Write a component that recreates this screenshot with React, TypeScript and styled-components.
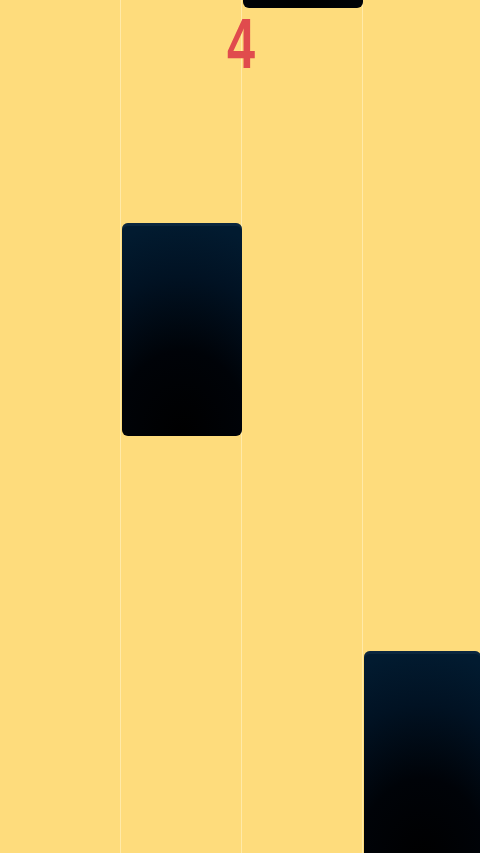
import styled, { createGlobalStyle } from "styled-components";

const GlobalStyle = createGlobalStyle`
  html, body {
    margin: 0;
    padding: 0;
    height: 100%;
    overflow: hidden;
    background: #fedc7c;
  }
  #root {
    height: 100%;
  }
`;

interface Tile {
  lane: number;
  top: number;
}

const tiles: Tile[] = [
  { lane: 2, top: -205 },
  { lane: 1, top: 223 },
  { lane: 3, top: 651 },
];

const TILE_HEIGHT = 213;

export default function App() {
  return (
    <>
      <GlobalStyle />
      <Board>
        {[0, 1, 2, 3].map((lane) => (
          <Lane key={lane} last={lane === 3}>
            {tiles
              .filter((t) => t.lane === lane)
              .map((t, i) => (
                <TileBlock key={i} style={{ top: t.top, height: TILE_HEIGHT }} />
              ))}
          </Lane>
        ))}
        <Score>4</Score>
      </Board>
    </>
  );
}

const Board = styled.div`
  position: relative;
  display: flex;
  width: 480px;
  height: 853px;
  overflow: hidden;
  background: #fedc7c;
`;

const Lane = styled.div<{ last?: boolean }>`
  position: relative;
  width: 120px;
  flex: ${(p) => (p.last ? "1" : "0 0 120px")};
  border-right: ${(p) => (p.last ? "none" : "1px solid #ffeaa8")};
`;

const TileBlock = styled.div`
  position: absolute;
  left: 1px;
  right: -1px;
  border-radius: 6px;
  background: radial-gradient(
    ellipse 140% 100% at 50% 100%,
    #000000 0%,
    #000308 40%,
    #011223 75%,
    #021b30 100%
  );
  box-shadow: inset 0 3px 0 rgba(30, 60, 90, 0.35);
`;

const Score = styled.div`
  position: absolute;
  top: 9px;
  left: 0;
  right: 0;
  text-align: center;
  font-family: "Liberation Sans", "DejaVu Sans", sans-serif;
  font-weight: 700;
  font-size: 70px;
  line-height: 70px;
  color: #e04b4d;
  transform: translateX(1px) scaleX(0.72);
`;
